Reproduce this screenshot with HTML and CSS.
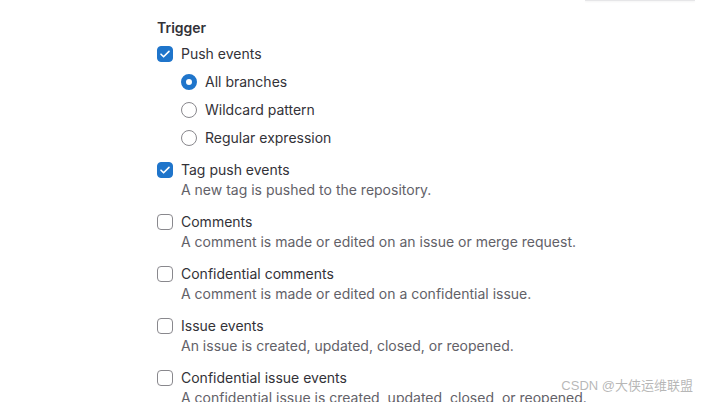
FILE: index.html
```html
<!DOCTYPE html>
<html lang="en">
<head>
    <meta charset="UTF-8">
    <meta name="viewport" content="width=device-width, initial-scale=1.0">
    <title>Webhook - Trigger</title>
    <link rel="stylesheet" href="styles.css">
</head>
<body>
    <div class="top-edge">
        <div class="field-edge"></div>
    </div>

    <div class="container">
        <h3 class="section-title">Trigger</h3>

        <div class="trigger-list">
            <div class="trigger">
                <label class="check-row">
                    <input type="checkbox" checked>
                    <span class="box"></span>
                    <span class="label">Push events</span>
                </label>
                <div class="radio-group">
                    <label class="radio-row">
                        <input type="radio" name="branchFilter" value="all" checked>
                        <span class="dot"></span>
                        <span class="label">All branches</span>
                    </label>
                    <label class="radio-row">
                        <input type="radio" name="branchFilter" value="wildcard">
                        <span class="dot"></span>
                        <span class="label">Wildcard pattern</span>
                    </label>
                    <label class="radio-row">
                        <input type="radio" name="branchFilter" value="regex">
                        <span class="dot"></span>
                        <span class="label">Regular expression</span>
                    </label>
                </div>
            </div>

            <div class="trigger">
                <label class="check-row">
                    <input type="checkbox" checked>
                    <span class="box"></span>
                    <span class="label">Tag push events</span>
                </label>
                <p class="help">A new tag is pushed to the repository.</p>
            </div>

            <div class="trigger">
                <label class="check-row">
                    <input type="checkbox">
                    <span class="box"></span>
                    <span class="label">Comments</span>
                </label>
                <p class="help">A comment is made or edited on an issue or merge request.</p>
            </div>

            <div class="trigger">
                <label class="check-row">
                    <input type="checkbox">
                    <span class="box"></span>
                    <span class="label">Confidential comments</span>
                </label>
                <p class="help">A comment is made or edited on a confidential issue.</p>
            </div>

            <div class="trigger">
                <label class="check-row">
                    <input type="checkbox">
                    <span class="box"></span>
                    <span class="label">Issue events</span>
                </label>
                <p class="help">An issue is created, updated, closed, or reopened.</p>
            </div>

            <div class="trigger">
                <label class="check-row">
                    <input type="checkbox">
                    <span class="box"></span>
                    <span class="label">Confidential issue events</span>
                </label>
                <p class="help">A confidential issue is created, updated, closed, or reopened.</p>
            </div>
        </div>
    </div>

    <div class="watermark">CSDN @大侠运维联盟</div>
</body>
</html>
```

FILE: styles.css
```css
* {
    margin: 0;
    padding: 0;
    box-sizing: border-box;
}

body {
    background-color: #ffffff;
    font-family: Inter, "Noto Sans", sans-serif;
    font-size: 14px;
    line-height: 20px;
    color: #333238;
    height: 402px;
    overflow: hidden;
}

/* bottom edge of the field above the section */
.top-edge {
    display: flex;
    justify-content: flex-end;
    padding-right: 8px;
}

.field-edge {
    width: 110px;
    height: 1px;
    background-color: #e6e6e8;
    box-shadow: 0 1px 2px rgba(0, 0, 0, 0.06);
}

.container {
    padding: 17px 0 0 157px;
}

.section-title {
    font-size: 14px;
    font-weight: 600;
    line-height: 20px;
    margin-bottom: 6px;
}

.trigger-list {
    display: flex;
    flex-direction: column;
    gap: 12px;
}

.check-row,
.radio-row {
    display: flex;
    align-items: center;
    cursor: pointer;
}

.check-row input,
.radio-row input {
    display: none;
}

.box {
    width: 16px;
    height: 16px;
    border: 1px solid #89888d;
    border-radius: 4px;
    margin-right: 8px;
    flex-shrink: 0;
    background: #fff;
}

.check-row input:checked + .box {
    border-color: #1f75cb;
    background-color: #1f75cb;
    background-image: url("data:image/svg+xml,%3Csvg xmlns='http://www.w3.org/2000/svg' viewBox='0 0 16 16'%3E%3Cpath d='M4 8.2l2.6 2.6L12 5.4' fill='none' stroke='%23fff' stroke-width='1.6' stroke-linecap='round' stroke-linejoin='round'/%3E%3C/svg%3E");
    background-size: 16px 16px;
    background-position: center;
}

.radio-group {
    display: flex;
    flex-direction: column;
    gap: 8px;
    margin-top: 8px;
    padding-left: 24px;
}

.dot {
    width: 16px;
    height: 16px;
    border: 1px solid #89888d;
    border-radius: 50%;
    margin-right: 8px;
    flex-shrink: 0;
    background: #fff;
}

.radio-row input:checked + .dot {
    border: 5px solid #1f75cb;
}

.help {
    padding-left: 24px;
    color: #626168;
}

.watermark {
    position: absolute;
    right: 10px;
    bottom: 8px;
    font-family: "Liberation Sans", "Noto Sans CJK SC", sans-serif;
    font-size: 13px;
    line-height: 16px;
    color: rgba(160, 160, 160, 0.75);
}
```
